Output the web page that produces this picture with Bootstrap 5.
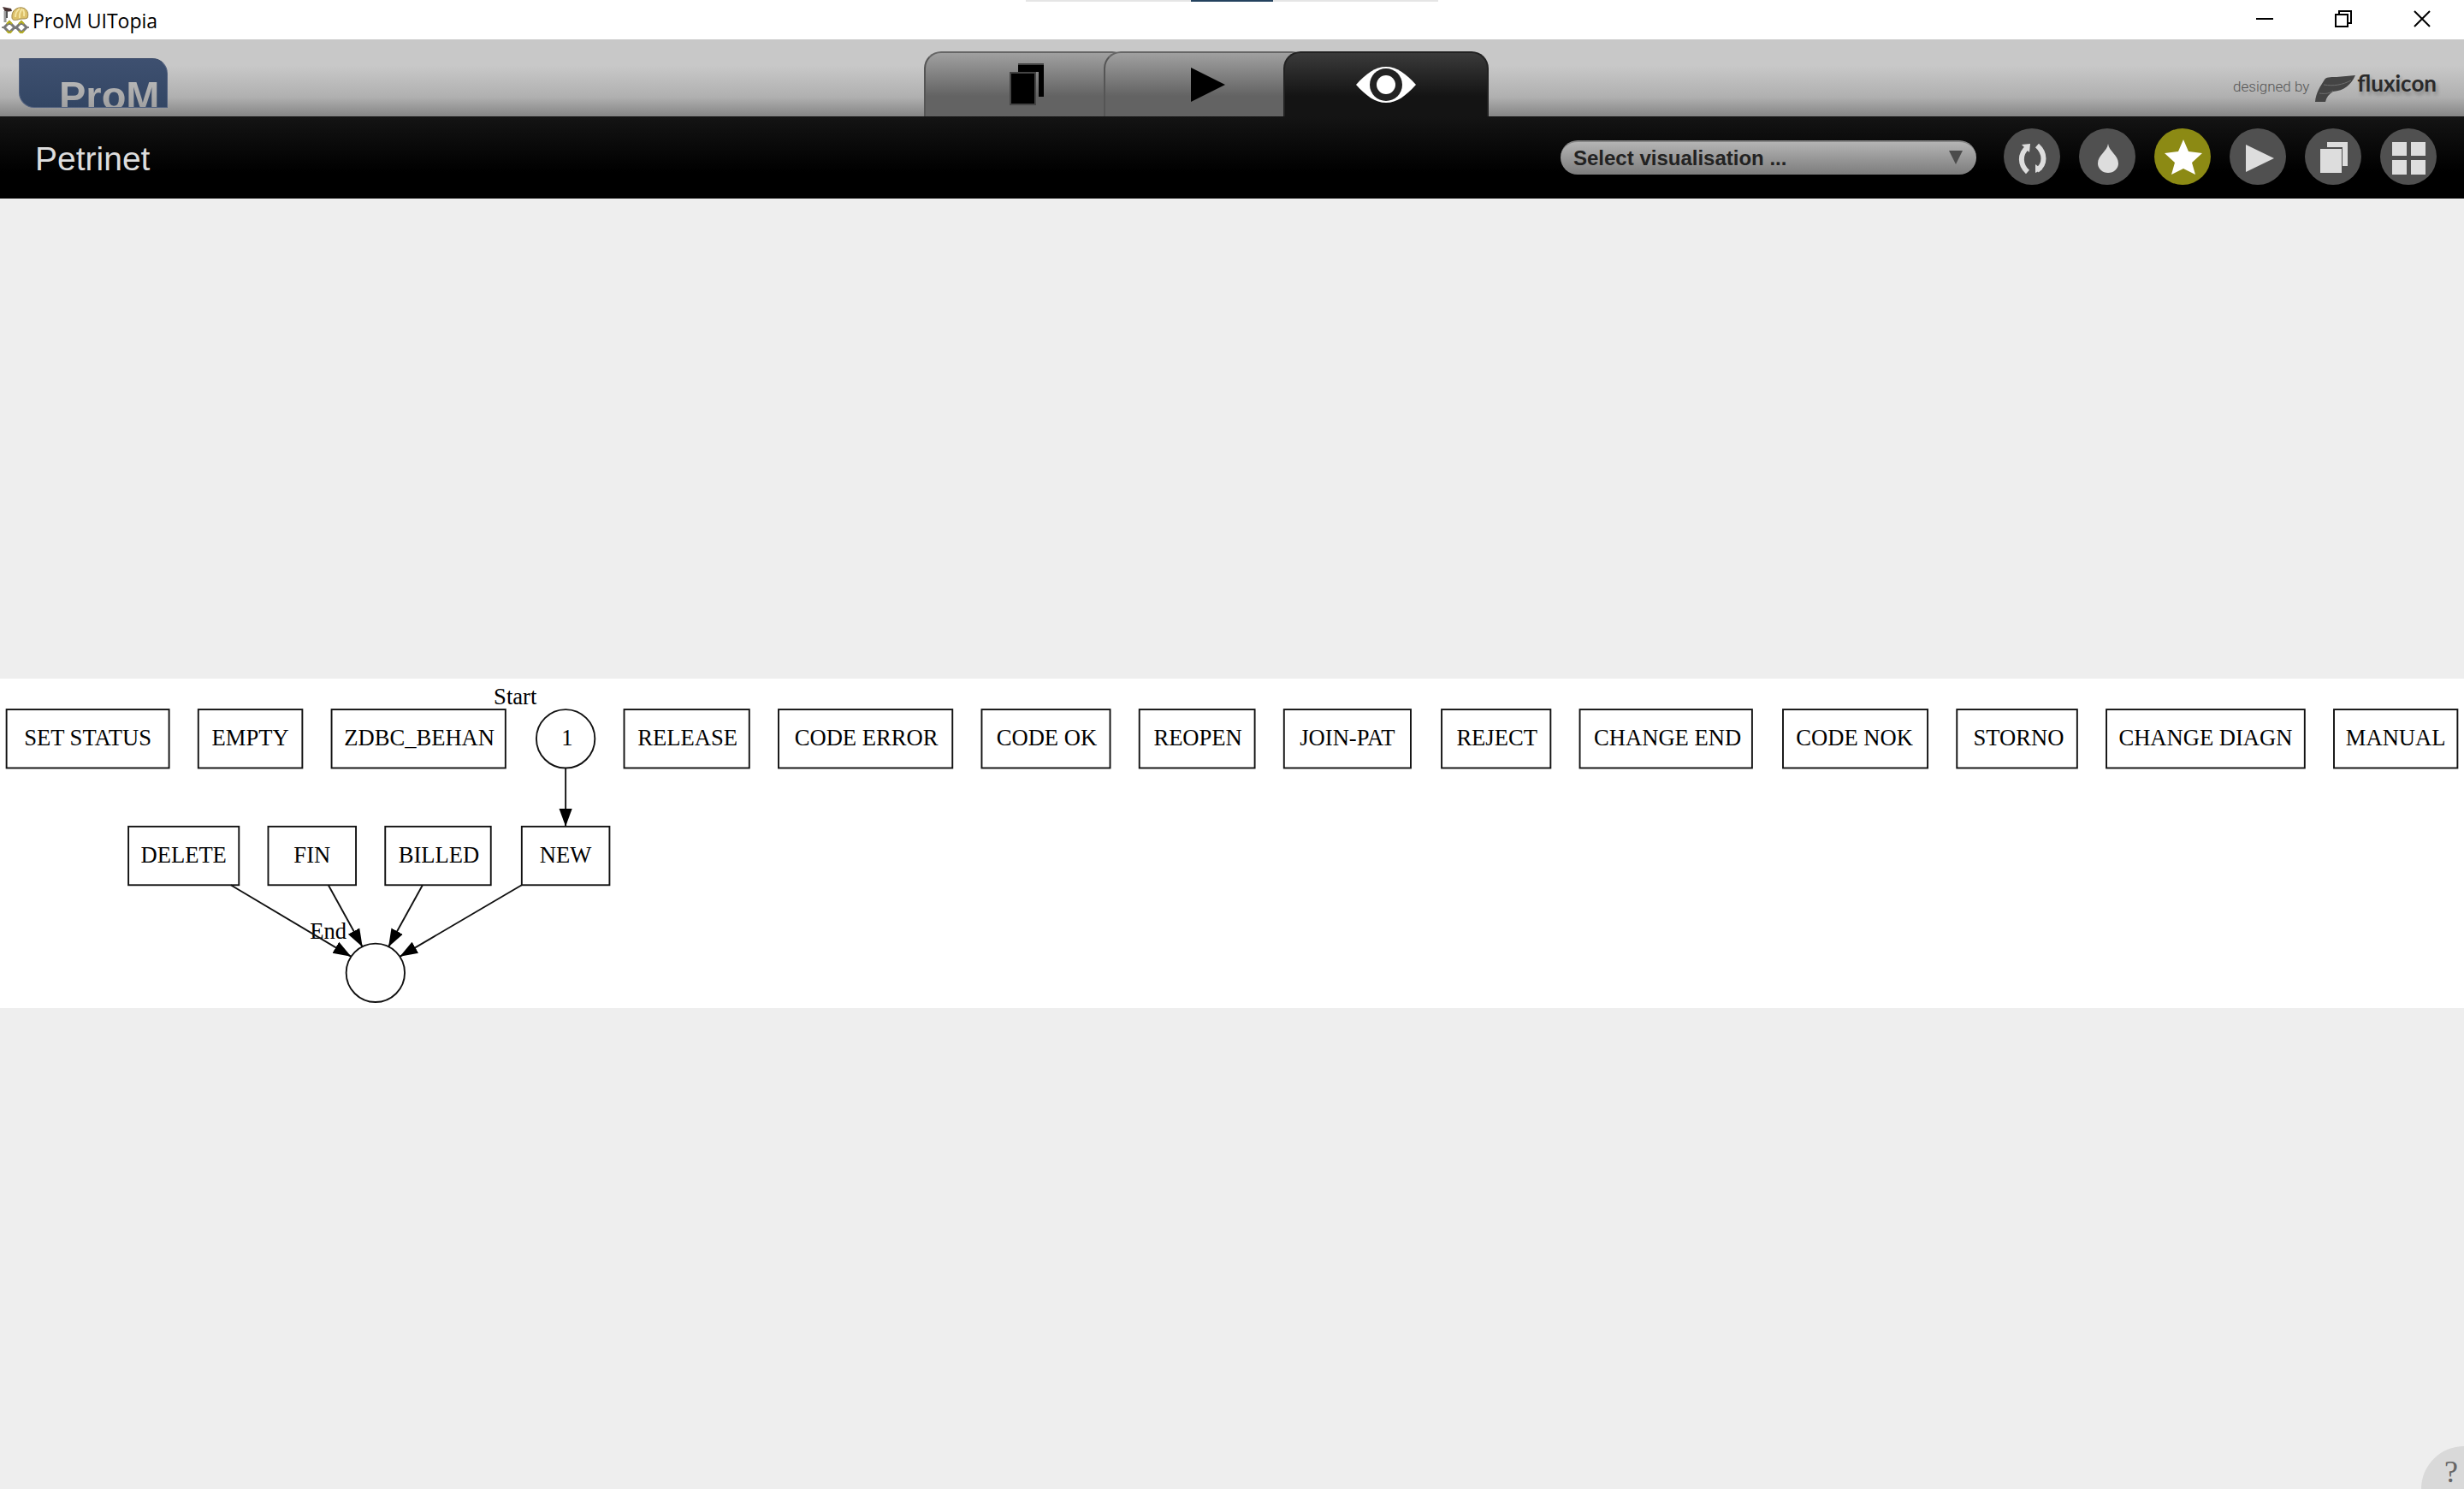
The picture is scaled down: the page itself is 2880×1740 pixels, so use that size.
<!DOCTYPE html>
<html lang="en">
<head>
<meta charset="utf-8">
<meta name="viewport" content="width=device-width, initial-scale=1">
<title>ProM UITopia</title>
<link href="https://cdn.jsdelivr.net/npm/bootstrap@5.3.0/dist/css/bootstrap.min.css" rel="stylesheet">
<style>
  body { background: #eee; font-family: "Liberation Sans", Arial, sans-serif; }
  svg { display: block; }
  button { border: 0; padding: 0; background: none; }

  .title-bar { height: 46px; background: #fff; color: #000; padding: 0 3px 0 2px; }
  .title-text { font: 23px/44px "Open Sans", "Noto Sans", sans-serif; padding-top: 2px; }
  .snap-strip { width: 482px; height: 2px; background: #e5e5e5; left: 1199px; }
  .snap-strip i { width: 96px; height: 2px; background: #24425e; }
  .win-btn { width: 92px; height: 46px; }

  .tool-bar { height: 90px; background: linear-gradient(#c8c8c8 0, #c8c8c8 34%, #b0b0b0 75%, #858585 100%); }
  .side { flex: 1 1 0; }
  .prom-logo { width: 174px; height: 58px; margin: 22px 0 0 22px; border-radius: 0 18px 0 18px;
    background: linear-gradient(#3e5070, #334664); overflow: hidden; border: 1px solid #52617f; border-top-color: #3a4a68; }
  .prom-logo span { font: bold 47px/46px "Liberation Sans", Arial, sans-serif; padding: 20px 0 0 46px; display: block;
    background: linear-gradient(#c8c8c8, #9a9a9a); -webkit-background-clip: text; background-clip: text; color: transparent; }
  .tabs { width: 720px; margin-top: 14px; }
  .tab { width: 240px; height: 76px; border: 2px solid #4d4d4d; border-color: #666 #4d4d4d #555 #555; border-bottom: 0;
    border-radius: 20px 20px 0 0; background: linear-gradient(#a0a0a0, #636363 68%); }
  .tab + .tab { margin-left: -30px; }
  .tab.current { background: linear-gradient(#3a3a3a, #141414 68%); border-color: #222; }
  .credit { padding: 18px 32px 0 0; color: #2a2a2a; }
  .credit-by { font: 300 17px/24px Roboto, sans-serif; color: #555; padding-top: 25px; }
  .credit-name { font: bold 26px/24px Lato, sans-serif; text-shadow: 2px 4px 4px rgba(0,0,0,.25); padding-top: 21px; }

  .view-bar { height: 96px; background: linear-gradient(#141414, #000 68%); padding: 0 32px 2px 41px; }
  .view-title { font-size: 39px; line-height: 44px; padding-top: 6px; color: #ddd; }
  .picker select { width: 486px; height: 40px; border: 0; border-top: 2px solid #858585; border-radius: 20px; appearance: none;
    background: linear-gradient(#b4b4b4, #7c7c7c); color: #222; font: bold 24px/36px "Liberation Sans", Arial, sans-serif; padding: 0 40px 0 15px; }
  .picker { padding-top: 2px; }
  .picker svg { right: 16px; top: 14px; pointer-events: none; }
  .round-set { gap: 22px; }
  .round-btn { width: 66px; height: 66px; border-radius: 50%; background: #505050; }
  .round-btn.favourite { background: #8c8a14; }

  .net-area { padding-bottom: 1px; }
  .net-sheet { background: #fff; }
  .net-sheet svg { width: 100%; height: auto; }
  .net-sheet text { font: 14px "Liberation Serif", "Times New Roman", serif; text-anchor: middle; fill: #000; }
  .net-sheet rect, .net-sheet circle, .net-sheet line { fill: none; stroke: #111; stroke-width: 1; }
  .help-btn { width: 50px; height: 50px; border-radius: 50px 0 0 0; background: #d9d9d9; right: 0; bottom: 0; color: #666;
    font: 36px/36px "Liberation Serif", serif; padding: 12px 0 2px 27px; }
</style>
<script src="https://cdn.jsdelivr.net/npm/bootstrap@5.3.0/dist/js/bootstrap.bundle.min.js"></script>
</head>
<body class="d-flex flex-column min-vh-100 position-relative">

<header class="title-bar d-flex align-items-center position-relative">
  <svg width="32" height="32" viewBox="0 0 32 32" aria-hidden="true">
    <path d="M1 1l10 2 1 3-8 1z" fill="#4a3434"/>
    <path d="M4 6v13" stroke="#999" stroke-width="3"/>
    <path d="M6 6v8" stroke="#555" stroke-width="2"/>
    <path d="M12 14C11 5 18 1 24 2c6 1 8 7 6 12-3 2-7 0-11 2-4 1-6 1-7-2z" fill="#dcc06a" stroke="#a08a50"/>
    <path d="M16 13c0-5 2-8 5-10M21 14c-1-5 1-8 3-11M26 12c1-4 0-6-1-8" fill="none" stroke="#f5e6a4" stroke-width="2"/>
    <path d="M0 25h32" stroke="#888" stroke-width="2"/>
    <path d="M9 19l6 6-6 6-6-6zM23 19l6 6-6 6-6-6z" fill="#fff" stroke="#777" stroke-width="3"/>
    <path d="M6 21l3-3 3 3M6 29l3 3 3-3M20 21l3-3 3 3M20 29l3 3 3-3" fill="none" stroke="#b5ae22" stroke-width="2"/>
  </svg>
  <span class="title-text ms-1">ProM UITopia</span>
  <div class="snap-strip position-absolute top-0 d-flex justify-content-center"><i></i></div>
  <div class="d-flex ms-auto">
    <button class="win-btn d-flex align-items-center justify-content-center" aria-label="Minimise">
      <svg width="20" height="20"><path d="M0 9h20" stroke="#000" stroke-width="2"/></svg></button>
    <button class="win-btn d-flex align-items-center justify-content-center" aria-label="Restore">
      <svg width="20" height="22"><path d="M1 5h14v14H1zM5 5V1h14v14h-4" fill="none" stroke="#000" stroke-width="2"/></svg></button>
    <button class="win-btn d-flex align-items-center justify-content-center" aria-label="Close">
      <svg width="20" height="22"><path d="M1 1l18 18M19 1L1 19" stroke="#000" stroke-width="2"/></svg></button>
  </div>
</header>

<nav class="tool-bar d-flex" aria-label="Workspaces">
  <div class="side"><div class="prom-logo"><span>ProM</span></div></div>
  <div class="tabs d-flex">
    <button class="tab flex-shrink-0 d-flex align-items-center justify-content-center" aria-label="Objects">
      <svg width="40" height="50" viewBox="0 0 40 50"><path d="M10 2h30v37h-6V10H10z" fill="#000"/><path d="M10 1h30" stroke="#444" stroke-width="2"/><path d="M1 11h29v37H1z" fill="#000" stroke="#444" stroke-width="2"/></svg></button>
    <button class="tab flex-shrink-0 d-flex align-items-center justify-content-center position-relative" aria-label="Actions">
      <svg width="44" height="40" viewBox="0 0 44 40"><path d="M4 0l40 20L4 40z" fill="#000"/></svg></button>
    <button class="tab current flex-shrink-0 d-flex align-items-center justify-content-center position-relative" aria-label="Views">
      <svg width="70" height="42" viewBox="0 0 70 42"><path d="M0 21C12 8 22 0 35 0s23 8 35 21C58 34 48 42 35 42S12 34 0 21z" fill="#fff"/><circle cx="35" cy="21" r="19" fill="#222"/><circle cx="35" cy="21" r="11" fill="#fff"/></svg></button>
  </div>
  <div class="side">
    <div class="credit d-flex justify-content-end align-items-start">
      <span class="credit-by">designed by</span>
      <svg width="56" height="40" viewBox="0 0 56 40" class="mt-4" aria-hidden="true">
        <path d="M16 4c2-3 6-3 14-3l22-2c-5 11-13 18-26 19-5 3-8 7-9 12H5C6 19 11 12 16 4z" transform="translate(2 1)" fill="#444"/>
        <path d="M17 11c12 2 22 0 32-5M12 21c8 1 12 0 16-3" fill="none" stroke="#6e6e6e"/></svg>
      <span class="credit-name">fluxicon</span>
    </div>
  </div>
</nav>

<section class="view-bar d-flex align-items-center">
  <h1 class="view-title fw-normal mb-0 me-auto">Petrinet</h1>
  <div class="picker position-relative me-4">
    <select aria-label="Select visualisation"><option>Select visualisation ...</option></select>
    <svg class="position-absolute" width="16" height="16" aria-hidden="true"><path d="M0 0h16L8 16z" fill="#4c4c4c"/></svg>
  </div>
  <div class="round-set d-flex ms-2">
    <button class="round-btn" aria-label="Refresh"><svg width="66" height="66"><path d="M28 51C19 43 18 30 28 22M39 20c10 9 10 22 0 29" fill="none" stroke="#ddd" stroke-width="6"/><path d="M21 19l10-1-1 10zM37 42l8 6-8 4z" fill="#ddd"/></svg></button>
    <button class="round-btn" aria-label="Colour"><svg width="66" height="66"><path d="M34 18c1 9 12 13 12 23a12 11 0 0 1-24 0c0-10 11-14 12-23z" fill="#ddd"/></svg></button>
    <button class="round-btn favourite" aria-label="Favourite"><svg width="66" height="66"><path d="M34 13l6 14 16 2-12 11 4 14-14-7-14 7 4-14-12-11 16-2z" fill="#fff"/></svg></button>
    <button class="round-btn" aria-label="Use in action"><svg width="66" height="66"><path d="M19 19l33 16-33 16z" fill="#ddd"/></svg></button>
    <button class="round-btn" aria-label="Show in objects"><svg width="66" height="66"><path d="M26 16h24v28h-6V22H26z" fill="#ddd"/><path d="M18 24h25v28H18z" fill="#ddd"/></svg></button>
    <button class="round-btn" aria-label="Overview"><svg width="66" height="66"><path d="M14 16h17v16H14zM36 16h17v16H36zM14 37h17v17H14zM36 37h17v17H36z" fill="#ddd"/></svg></button>
  </div>
</section>

<main class="net-area flex-grow-1 d-flex flex-column justify-content-center">
  <div class="net-sheet">
    <svg viewBox="0 0 1516 203" role="img" aria-label="Petri net">
      <defs><marker id="tip" markerUnits="userSpaceOnUse" markerWidth="12" markerHeight="10" refX="11" refY="5" orient="auto"><path d="M0 1l11 4-11 4z"/></marker></defs>
      <g>
        <rect x="4" y="19" width="100" height="36"/><text x="54" y="41">SET STATUS</text>
        <rect x="122" y="19" width="64" height="36"/><text x="154" y="41">EMPTY</text>
        <rect x="204" y="19" width="107" height="36"/><text x="258" y="41">ZDBC_BEHAN</text>
        <rect x="384" y="19" width="77" height="36"/><text x="423" y="41">RELEASE</text>
        <rect x="479" y="19" width="107" height="36"/><text x="533" y="41">CODE ERROR</text>
        <rect x="604" y="19" width="79" height="36"/><text x="644" y="41">CODE OK</text>
        <rect x="701" y="19" width="71" height="36"/><text x="737" y="41">REOPEN</text>
        <rect x="790" y="19" width="78" height="36"/><text x="829" y="41">JOIN-PAT</text>
        <rect x="887" y="19" width="67" height="36"/><text x="921" y="41">REJECT</text>
        <rect x="972" y="19" width="106" height="36"/><text x="1026" y="41">CHANGE END</text>
        <rect x="1097" y="19" width="89" height="36"/><text x="1141" y="41">CODE NOK</text>
        <rect x="1204" y="19" width="74" height="36"/><text x="1242" y="41">STORNO</text>
        <rect x="1296" y="19" width="122" height="36"/><text x="1357" y="41">CHANGE DIAGN</text>
        <rect x="1436" y="19" width="76" height="36"/><text x="1474" y="41">MANUAL</text>
      </g>
      <g>
        <rect x="79" y="91" width="68" height="36"/><text x="113" y="113">DELETE</text>
        <rect x="165" y="91" width="54" height="36"/><text x="192" y="113">FIN</text>
        <rect x="237" y="91" width="65" height="36"/><text x="270" y="113">BILLED</text>
        <rect x="321" y="91" width="54" height="36"/><text x="348" y="113">NEW</text>
      </g>
      <circle cx="348" cy="37" r="18"/><text x="349" y="41">1</text><text x="317" y="16">Start</text>
      <circle cx="231" cy="181" r="18"/><text x="202" y="160">End</text>
      <g>
        <line x1="348" y1="55" x2="348" y2="91" marker-end="url(#tip)"/>
        <line x1="142" y1="127" x2="216" y2="171" marker-end="url(#tip)"/>
        <line x1="202" y1="127" x2="223" y2="165" marker-end="url(#tip)"/>
        <line x1="260" y1="127" x2="239" y2="165" marker-end="url(#tip)"/>
        <line x1="321" y1="127" x2="246" y2="171" marker-end="url(#tip)"/>
      </g>
    </svg>
  </div>
</main>

<button class="help-btn position-absolute text-start" aria-label="Help">?</button>
</body>
</html>
